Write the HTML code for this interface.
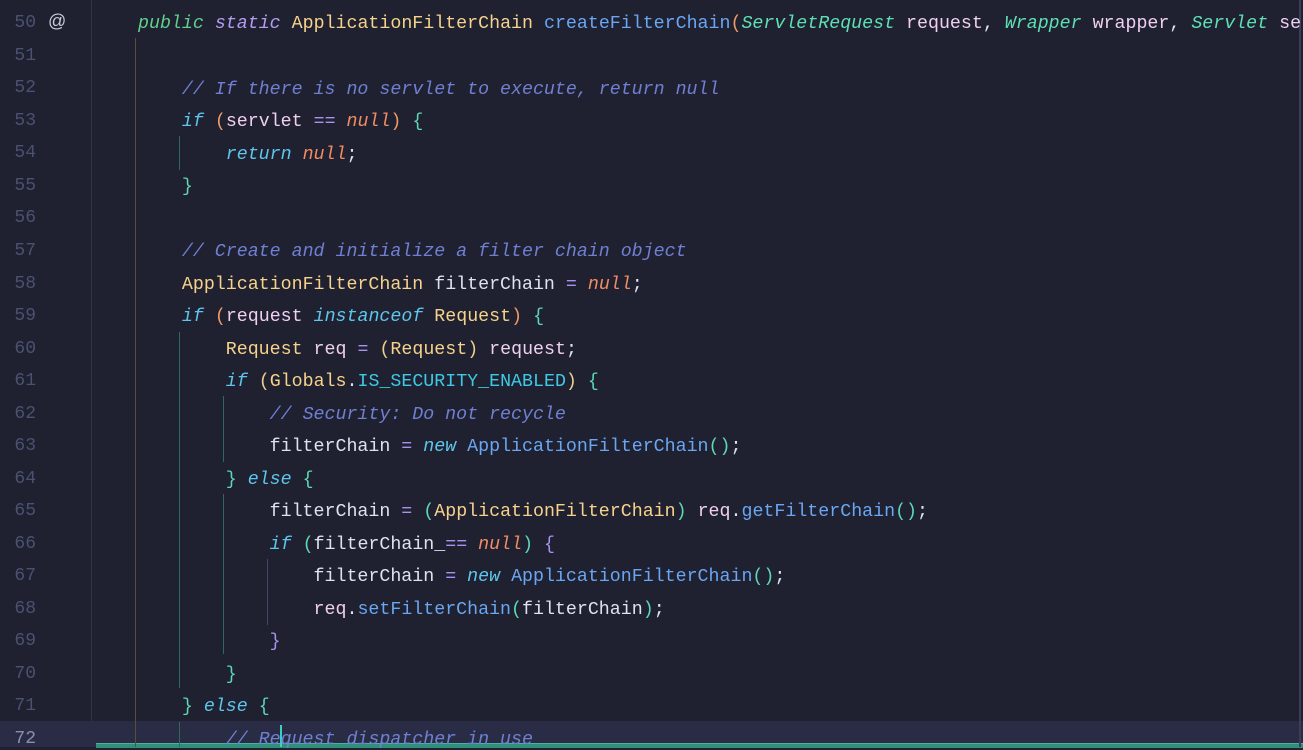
<!DOCTYPE html>
<html><head><meta charset="utf-8"><style>
html,body{margin:0;padding:0;width:1303px;height:747px;overflow:hidden;background:#1f2030;}
.ln{position:absolute;left:0;width:36px;text-align:right;color:#4b5170;font:18px "Liberation Mono",monospace;}
.c{position:absolute;left:138px;white-space:pre;color:#dfe0f2;font:18.3px/1 "Liberation Mono",monospace;}
.k{color:#5ec6ec;font-style:italic}
.pub{color:#5fd08c;font-style:italic}
.st{color:#b59cf2;font-style:italic}
.y{color:#f6d28c}
.m{color:#6aa6f2}
.cm{color:#6f80d2;font-style:italic}
.n{color:#f28c62;font-style:italic}
.t{color:#5ee0b4;font-style:italic}
.v{color:#f0cff0}
.cy{color:#3fc9e4}
.o{color:#f09a68}
.g{color:#5ed8b4}
.p{color:#a692f0}
.yb{color:#eccf8a}
.guide{position:absolute;width:1px;}
</style></head><body>
<div style="position:absolute;left:91px;top:0;width:1px;height:747px;background:#30334a"></div>
<div style="position:absolute;left:0;top:721px;width:1303px;height:26px;background:#292c44"></div>
<div style="position:absolute;left:96px;top:743px;width:1207px;height:4px;background:#2f8f7a;border-top:1px solid #4fb0a0"></div>
<div style="position:absolute;left:1299px;top:0;width:2px;height:747px;background:#3a3d55"></div>
<div style="position:absolute;left:280px;top:725px;width:2px;height:22px;background:#3ad0c0"></div>
<div class="guide" style="left:135px;top:38px;height:709px;background:#5a4e38"></div>
<div class="guide" style="left:179px;top:136px;height:34px;background:#2f6a60"></div>
<div class="guide" style="left:179px;top:332px;height:356px;background:#2f6a60"></div>
<div class="guide" style="left:179px;top:722px;height:25px;background:#2f6a60"></div>
<div class="guide" style="left:223px;top:396px;height:66px;background:#2f6a60"></div>
<div class="guide" style="left:223px;top:494px;height:160px;background:#2f6a60"></div>
<div class="guide" style="left:267px;top:559px;height:66px;background:#454866"></div>

<div class="ln" style="top:13px">50</div><div style="position:absolute;left:48px;top:11px;color:#c8cad8;font:18px 'Liberation Sans',sans-serif">@</div>
<div class="ln" style="top:46px">51</div>
<div class="ln" style="top:78px">52</div>
<div class="ln" style="top:111px">53</div>
<div class="ln" style="top:143px">54</div>
<div class="ln" style="top:176px">55</div>
<div class="ln" style="top:208px">56</div>
<div class="ln" style="top:241px">57</div>
<div class="ln" style="top:274px">58</div>
<div class="ln" style="top:306px">59</div>
<div class="ln" style="top:339px">60</div>
<div class="ln" style="top:371px">61</div>
<div class="ln" style="top:404px">62</div>
<div class="ln" style="top:436px">63</div>
<div class="ln" style="top:469px">64</div>
<div class="ln" style="top:501px">65</div>
<div class="ln" style="top:534px">66</div>
<div class="ln" style="top:566px">67</div>
<div class="ln" style="top:599px">68</div>
<div class="ln" style="top:631px">69</div>
<div class="ln" style="top:664px">70</div>
<div class="ln" style="top:696px">71</div>
<div class="ln" style="top:729px;color:#8a90b0">72</div>

<div class="c" style="top:15px"><span class="pub">public</span> <span class="st">static</span> <span class="y">ApplicationFilterChain</span> <span class="m">createFilterChain</span><span class="o">(</span><span class="t">ServletRequest</span> <span class="v">request</span>, <span class="t">Wrapper</span> <span class="v">wrapper</span>, <span class="t">Servlet</span> <span class="v">se</span></div>
<div class="c" style="top:81px">    <span class="cm">// If there is no servlet to execute, return null</span></div>
<div class="c" style="top:113px">    <span class="k">if</span> <span class="o">(</span><span class="v">servlet</span> <span class="p">==</span> <span class="n">null</span><span class="o">)</span> <span class="g">{</span></div>
<div class="c" style="top:146px">        <span class="k">return</span> <span class="n">null</span>;</div>
<div class="c" style="top:178px">    <span class="g">}</span></div>
<div class="c" style="top:243px">    <span class="cm">// Create and initialize a filter chain object</span></div>
<div class="c" style="top:276px">    <span class="y">ApplicationFilterChain</span> filterChain <span class="p">=</span> <span class="n">null</span>;</div>
<div class="c" style="top:308px">    <span class="k">if</span> <span class="o">(</span><span class="v">request</span> <span class="k">instanceof</span> <span class="y">Request</span><span class="o">)</span> <span class="g">{</span></div>
<div class="c" style="top:341px">        <span class="y">Request</span> <span class="v">req</span> <span class="p">=</span> <span class="yb">(</span><span class="y">Request</span><span class="yb">)</span> <span class="v">request</span>;</div>
<div class="c" style="top:373px">        <span class="k">if</span> <span class="yb">(</span><span class="y">Globals</span>.<span class="cy">IS_SECURITY_ENABLED</span><span class="yb">)</span> <span class="g">{</span></div>
<div class="c" style="top:406px">            <span class="cm">// Security: Do not recycle</span></div>
<div class="c" style="top:438px">            filterChain <span class="p">=</span> <span class="k">new</span> <span class="m">ApplicationFilterChain</span><span class="g">()</span>;</div>
<div class="c" style="top:471px">        <span class="g">}</span> <span class="k">else</span> <span class="g">{</span></div>
<div class="c" style="top:503px">            filterChain <span class="p">=</span> <span class="g">(</span><span class="y">ApplicationFilterChain</span><span class="g">)</span> <span class="v">req</span>.<span class="m">getFilterChain</span><span class="g">()</span>;</div>
<div class="c" style="top:536px">            <span class="k">if</span> <span class="g">(</span>filterChain_<span class="p">==</span> <span class="n">null</span><span class="g">)</span> <span class="p">{</span></div>
<div class="c" style="top:568px">                filterChain <span class="p">=</span> <span class="k">new</span> <span class="m">ApplicationFilterChain</span><span class="g">()</span>;</div>
<div class="c" style="top:601px">                <span class="v">req</span>.<span class="m">setFilterChain</span><span class="g">(</span>filterChain<span class="g">)</span>;</div>
<div class="c" style="top:633px">            <span class="p">}</span></div>
<div class="c" style="top:666px">        <span class="g">}</span></div>
<div class="c" style="top:698px">    <span class="g">}</span> <span class="k">else</span> <span class="g">{</span></div>
<div class="c" style="top:731px">        <span class="cm">// Request dispatcher in use</span></div>
</body></html>
